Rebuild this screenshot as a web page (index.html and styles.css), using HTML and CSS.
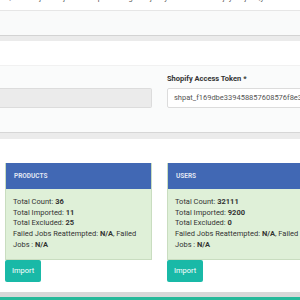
FILE: index.html
```html
<html>
  <head>
    <meta name="viewport" content="width=device-width, initial-scale=1" />
    <link rel="stylesheet" href="styles.css">
  </head>
  <body>
    <div class="token-card">
      <div class="token-text">cQiZmM1ZjY1YzNjMDVsSn9pFWixMzg2ZmljYTcyZTkiNDdiZ3ThMjoyLTVjNzQyODMxNTE1YzQ4</div>
      <div class="token-footer"></div>
    </div>

    <div class="form-card">
      <div class="form-head"></div>
      <div class="form-body">
        <div class="form-row">
          <div class="form-group">
            <div class="input input-disabled"></div>
          </div>
          <div class="form-group">
            <label class="label">Shopify Access Token *</label>
            <div class="input">shpat_f169dbe339458857608576f8e3c1a2</div>
          </div>
        </div>
      </div>
    </div>

    <div class="import-section">
      <div class="panel-row">
        <div class="import-col">
          <div class="panel">
            <div class="panel-heading">Products</div>
            <div class="panel-body">
              Total Count: <b>36</b><br>
              Total Imported: <b>11</b><br>
              Total Excluded: <b>25</b><br>
              Failed Jobs Reattempted: <b>N/A</b>, Failed Jobs : <b>N/A</b>
            </div>
          </div>
          <button class="btn-import">Import</button>
        </div>
        <div class="import-col">
          <div class="panel">
            <div class="panel-heading">Users</div>
            <div class="panel-body">
              Total Count: <b>32111</b><br>
              Total Imported: <b>9200</b><br>
              Total Excluded: <b>0</b><br>
              Failed Jobs Reattempted: <b>N/A</b>, Failed Jobs : <b>N/A</b>
            </div>
          </div>
          <button class="btn-import">Import</button>
        </div>
      </div>
    </div>

    <div class="footer-line"></div>
  </body>
</html>
```

FILE: styles.css
```css
html {
  overflow: hidden;
}
body {
  margin: 0;
  background: #ebebeb;
  font-family: Roboto, "Liberation Sans", sans-serif;
  font-size: 7.5px;
  line-height: 10.8px;
  color: #333;
}

.token-card {
  background: #fff;
}
.token-text {
  margin-top: -7px;
  height: 17px;
  white-space: nowrap;
  overflow: hidden;
  color: #555;
  padding-left: 2px;
}
.token-footer {
  height: 24px;
  background: #f9fafa;
  border-top: 1px solid #e6e6e6;
  border-bottom: 1px solid #d3d3d3;
}

.form-card {
  margin-top: 5px;
  background: #fff;
  border-bottom: 1px solid #d6d6d6;
}
.form-head {
  height: 24px;
  border-bottom: 1px solid #f1f1f1;
}
.form-body {
  background: #fafbfb;
  padding: 8px 0 24px;
}
.form-row {
  display: grid;
  grid-template-columns: 152px 147px;
  column-gap: 15px;
  align-items: end;
}
.label {
  display: block;
  font-weight: bold;
  margin-bottom: 3px;
}
.input {
  height: 18px;
  line-height: 18px;
  border: 1px solid #dcdcdc;
  border-radius: 2px;
  background: #fff;
  padding: 0 6px;
  color: #555;
  white-space: nowrap;
  overflow: hidden;
}
.input-disabled {
  background: #ebebeb;
  border-left: 0;
  border-radius: 0 2px 2px 0;
}

.import-section {
  margin-top: 6px;
  background: #fff;
  padding: 24px 0 10px;
}
.panel-row {
  display: grid;
  grid-template-columns: 147px 147px;
  column-gap: 15px;
  margin-left: 5px;
}
.panel {
  border: 1px solid #c9ddc0;
  border-top: 0;
}
.panel-heading {
  background: #4168b4;
  color: rgba(255, 255, 255, 0.85);
  height: 26px;
  line-height: 26px;
  padding: 0 8px;
  font-size: 6.5px;
  font-weight: bold;
  text-transform: uppercase;
}
.panel-body {
  background: #dff0d8;
  padding: 8px 7px 8px;
}
.btn-import {
  display: block;
  height: 22px;
  padding: 0 7px;
  border: 0;
  border-radius: 2px;
  background: #19b9a7;
  color: #fff;
  font-family: Roboto, "Liberation Sans", sans-serif;
  font-size: 7.5px;
}

.footer-line {
  height: 3px;
  border-top: 5px solid #d8d8d8;
  background: #26b99a;
}
```
